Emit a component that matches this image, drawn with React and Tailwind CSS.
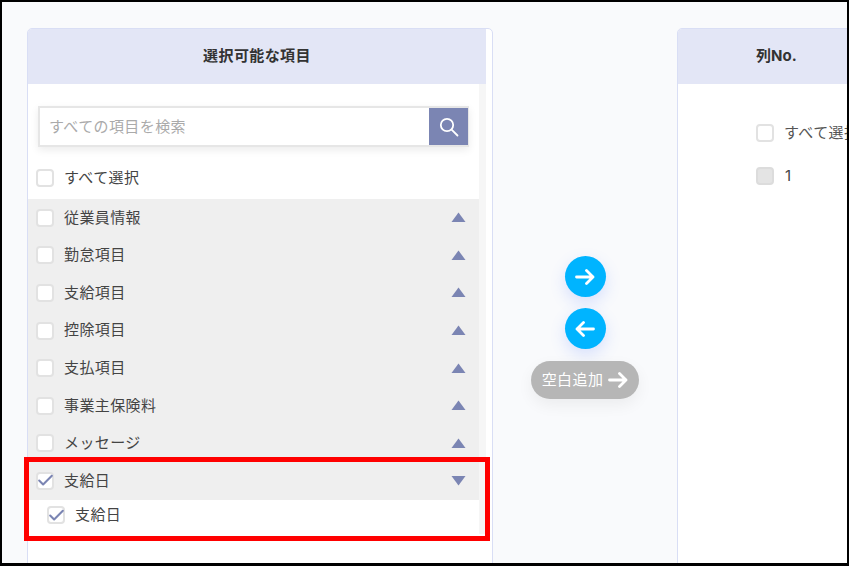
import React from 'react'
import { Check } from 'lucide-react'

const jp = { fontFamily: 'Inter, "Noto Sans CJK JP", sans-serif' }

function Box({ checked, gray }){
  return (
    <span className={'w-[18px] h-[18px] shrink-0 rounded-[4px] border-2 flex items-center justify-center ' + (gray ? 'bg-[#e4e4e4] border-[#dcdcdc]' : 'bg-white border-[#e2e2e2]')}>
      {checked && <Check size={19} strokeWidth={2.6} className="text-[#7b85b3] shrink-0" />}
    </span>
  )
}

function Arrow({ left }){
  return (
    <svg width="20" height="16" viewBox="0 0 20 16" fill="none" stroke="currentColor" strokeWidth="2.8" strokeLinecap="round" strokeLinejoin="round" className={left ? 'rotate-180 text-white' : 'text-white'}>
      <path d="M1.5 8H18M11.5 1.5L18 8L11.5 14.5" />
    </svg>
  )
}

function Group({ label, open, checked }){
  return (
    <div className="h-[37.6px] flex items-center pl-[8px] pr-[13px] bg-[#efefef]">
      <Box checked={checked} />
      <span className="ml-[10px] text-[15px] tracking-[0.4px] text-[#444] flex-1">{label}</span>
      <svg width="15" height="11" viewBox="0 0 15 11" className="text-[#7b85b3]">
        <path d={open ? 'M0.5 1 H14.5 L7.5 10.5 Z' : 'M7.5 0.5 L14.5 10 H0.5 Z'} fill="currentColor" />
      </svg>
    </div>
  )
}

const groups = ['従業員情報', '勤怠項目', '支給項目', '控除項目', '支払項目', '事業主保険料', 'メッセージ']

export default function App(){
  return (
    <div style={jp} className="relative w-[849px] h-[566px] overflow-hidden bg-[#f9fafc] border-t-2 border-l-2 border-r-[2px] border-b-[3px] border-black flex items-start pt-[26px] pl-[25px]">
      {/* left panel */}
      <div className="w-[466px] h-[560px] shrink-0 bg-white border border-[#d9def5] rounded-t-[5px] overflow-hidden flex">
        <div className="w-[458px] flex flex-col">
          <div className="h-[55px] shrink-0 bg-[#e3e6f6] flex items-center justify-center text-[15px] tracking-[0.4px] font-bold text-[#333]">選択可能な項目</div>
          <div className="flex">
            <div className="w-[451px] flex flex-col">
              <div className="mt-[22px] ml-[10px] w-[431px] h-[41px] flex border-2 border-[#e6e6e6] shadow-[0_3px_8px_rgba(0,0,0,0.08)]">
                <div className="flex-1 flex items-center pl-[9px] pt-[2px] text-[15px] tracking-[0.4px] text-[#aaa]">すべての項目を検索</div>
                <div className="w-[39px] -mr-[1px] bg-[#7b85b3] flex items-center justify-center">
                  <svg width="20" height="20" viewBox="0 0 20 20" fill="none" stroke="white" strokeWidth="1.8" strokeLinecap="round">
                    <circle cx="8" cy="8" r="6.2" />
                    <path d="M12.6 12.6L18.5 18.5" />
                  </svg>
                </div>
              </div>
              <div className="h-[52px] flex items-center pl-[8px] pt-[10px]">
                <Box />
                <span className="ml-[10px] pt-[1px] text-[15px] tracking-[0.4px] text-[#444]">すべて選択</span>
              </div>
              {groups.map(g => <Group key={g} label={g} />)}
              <Group label="支給日" open checked />
              <div className="h-[34px] flex items-center pl-[19px] pb-[3px] bg-white">
                <Box checked />
                <span className="ml-[10px] text-[15px] tracking-[0.4px] text-[#444]">支給日</span>
              </div>
            </div>
            <div className="w-[7px] bg-[#f6f6f6]"></div>
          </div>
        </div>
      </div>

      {/* move buttons */}
      <div className="w-[184px] shrink-0 flex flex-col items-center pt-[228px]">
        <button className="w-[41px] h-[41px] rounded-full bg-[#00b4ff] flex items-center justify-center shadow-[0_6px_16px_rgba(80,120,255,0.2)]">
          <Arrow />
        </button>
        <button className="mt-[11px] w-[41px] h-[41px] rounded-full bg-[#00b4ff] flex items-center justify-center shadow-[0_6px_16px_rgba(80,120,255,0.2)]">
          <Arrow left />
        </button>
        <button className="mt-[12px] w-[108px] h-[38px] rounded-full bg-[#b6b6b6] text-white text-[15px] tracking-[0.4px] flex items-center justify-center gap-[5px] shadow-[0_6px_16px_rgba(0,0,0,0.06)]">
          空白追加
          <Arrow />
        </button>
      </div>

      {/* right panel, runs off the page */}
      <div className="w-[400px] h-[560px] shrink-0 bg-white border border-[#d9def5] rounded-t-[5px] overflow-hidden">
        <div className="h-[55px] bg-[#e3e6f6] flex items-center pl-[78px] text-[15px] font-bold text-[#333]">列No.</div>
        <div className="pl-[78px] pt-[39px] flex flex-col">
          <div className="flex items-center h-[20px]">
            <Box />
            <span className="ml-[10px] text-[15px] tracking-[0.4px] text-[#555] whitespace-nowrap">すべて選択</span>
          </div>
          <div className="flex items-center h-[20px] mt-[23px]">
            <Box gray />
            <span className="ml-[11px] text-[15px] text-[#444]">1</span>
          </div>
        </div>
      </div>

      {/* red highlight */}
      <div className="absolute left-[22px] top-[455px] w-[466px] h-[84px] border-[5px] border-[#ff0000]"></div>
    </div>
  )
}
